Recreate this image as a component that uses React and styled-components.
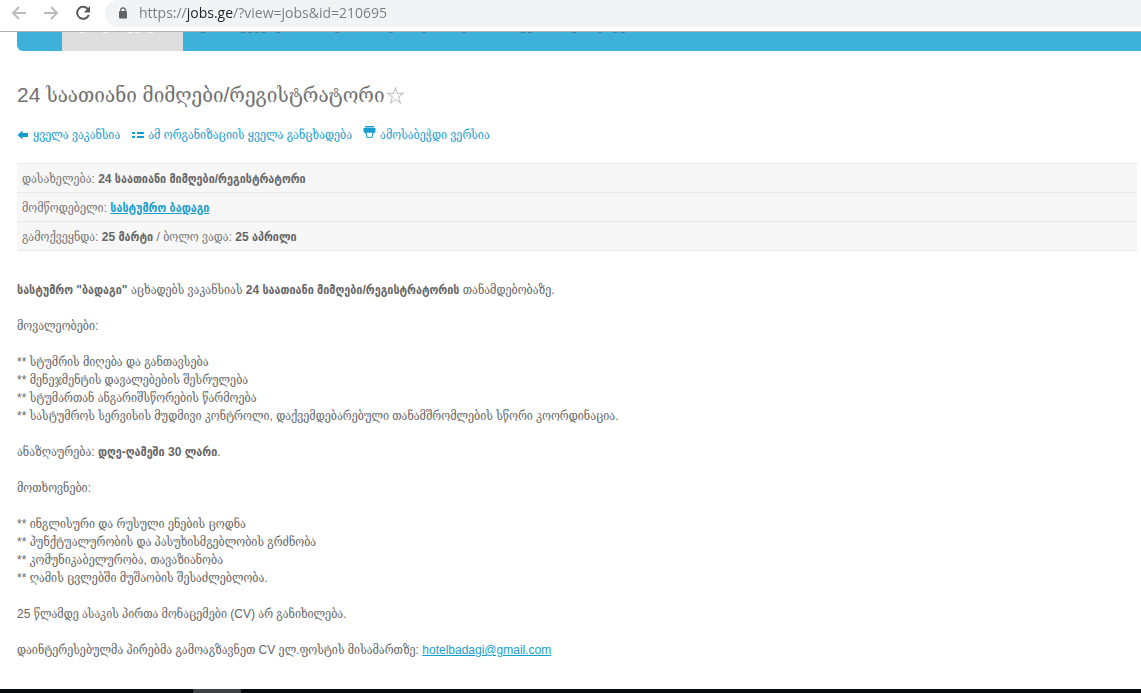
import React, { useState } from 'react';
import styled, { createGlobalStyle } from 'styled-components';

const duties = [
  'სტუმრის მიღება და განთავსება',
  'მენეჯმენტის დავალებების შესრულება',
  'სტუმართან ანგარიშსწორების წარმოება',
  'სასტუმროს სერვისის მუდმივი კონტროლი, დაქვემდებარებული თანამშრომლების სწორი კოორდინაცია.',
];

const requirements = [
  'ინგლისური და რუსული ენების ცოდნა',
  'პუნქტუალურობის და პასუხისმგებლობის გრძნობა',
  'კომუნიკაბელურობა, თავაზიანობა',
  'ღამის ცვლებში მუშაობის შესაძლებლობა.',
];

// tips of the menu letters that stick out under the toolbar
const lightTips = [18, 41, 66, 73, 87];
const darkTips = [18, 58, 65, 72, 79, 93, 152, 206, 239, 279, 338, 345, 389, 415, 430, 438];

function ArrowIcon({ flip }) {
  return (
    <svg width="16" height="16" viewBox="0 0 16 16" fill="none" stroke="currentColor" strokeWidth="2" aria-hidden="true">
      {flip ? <path d="M1 8h13M8 2l6 6-6 6" /> : <path d="M15 8H2M8 2L2 8l6 6" />}
    </svg>
  );
}

function ReloadIcon() {
  return (
    <svg width="16" height="16" viewBox="0 0 16 16" aria-hidden="true">
      <path d="M13.2 4.6A6 6 0 1 0 13.8 9.8" fill="none" stroke="currentColor" strokeWidth="2" />
      <path d="M15 1v6.4H8.8z" fill="currentColor" />
    </svg>
  );
}

function LockIcon() {
  return (
    <svg width="10" height="12" viewBox="0 0 10 12" aria-hidden="true">
      <rect x="1" y="4" width="8" height="7.5" rx="1" fill="currentColor" />
      <path d="M2.8 5V3a2.2 2.2 0 0 1 4.4 0v2" fill="none" stroke="currentColor" strokeWidth="1.3" />
    </svg>
  );
}

function BackIcon() {
  return (
    <svg width="12" height="10" viewBox="0 0 12 10" fill="currentColor" aria-hidden="true">
      <path d="M0.5 5L5.5 0.5V3H11v4H5.5v2.5z" />
    </svg>
  );
}

function ListIcon() {
  return (
    <svg width="13" height="8" viewBox="0 0 13 8" fill="currentColor" aria-hidden="true">
      <path d="M1 1h3v2H1zM6 1h7v2H6zM1 5h3v2H1zM6 5h7v2H6z" />
    </svg>
  );
}

function PrintIcon() {
  return (
    <svg width="13" height="12" viewBox="0 0 13 12" aria-hidden="true">
      <path d="M2 0h9v1.5H2zM0.5 2h12v3.5L10.8 7.5H2.2L0.5 5.5z" fill="currentColor" />
      <path d="M3 6h7l-0.8 5.4H3.8z" fill="#fff" stroke="currentColor" />
      <path d="M2 5h9v1.5H2z" fill="currentColor" />
    </svg>
  );
}

function StarIcon({ filled }) {
  return (
    <svg width="17" height="17" viewBox="0 0 16 16" aria-hidden="true">
      <path
        d="M8 0.9l1.8 5.1h5.6l-4.5 3.4 1.8 5.6L8 11.6 3.3 15l1.8-5.6L0.6 6h5.6z"
        fill={filled ? '#ffcc33' : '#fff'}
        stroke="#c4c4c4"
      />
    </svg>
  );
}

function Tips({ points, width, color }) {
  return (
    <svg width={width} height="1" aria-hidden="true">
      {points.map((x) => (
        <rect key={x} x={x} y="0" width="4" height="1" fill={color} />
      ))}
    </svg>
  );
}

export default function App() {
  const [url, setUrl] = useState('https://jobs.ge/?view=jobs&id=210695');
  const [starred, setStarred] = useState(false);

  return (
    <Page>
      <GlobalStyle />
      <Toolbar>
        <ToolButton type="button" aria-label="Back" $muted>
          <ArrowIcon />
        </ToolButton>
        <ToolButton type="button" aria-label="Forward" $muted>
          <ArrowIcon flip />
        </ToolButton>
        <ToolButton type="button" aria-label="Reload">
          <ReloadIcon />
        </ToolButton>
        <AddressBar>
          <LockIcon />
          <AddressInput
            type="text"
            aria-label="Address"
            spellCheck="false"
            value={url}
            onChange={(e) => setUrl(e.target.value)}
          />
        </AddressBar>
      </Toolbar>

      <Menu>
        <MenuHome />
        <MenuActive>
          <Tips points={lightTips} width={120} color="#f8f8f8" />
        </MenuActive>
        <Tips points={darkTips} width={450} color="#3a86a2" />
      </Menu>

      <Content>
        <TitleRow>
          <Title>24 საათიანი მიმღები/რეგისტრატორი</Title>
          <StarButton type="button" aria-label="Favourite" aria-pressed={starred} onClick={() => setStarred(!starred)}>
            <StarIcon filled={starred} />
          </StarButton>
        </TitleRow>

        <Links>
          <IconLink href="#all">
            <BackIcon />
            ყველა ვაკანსია
          </IconLink>
          <IconLink href="#company">
            <ListIcon />
            ამ ორგანიზაციის ყველა განცხადება
          </IconLink>
          <IconLink href="#print" $raised>
            <PrintIcon />
            ამოსაბეჭდი ვერსია
          </IconLink>
        </Links>

        <Details>
          <tbody>
            <tr>
              <Cell>
                დასახელება: <Bold>24 საათიანი მიმღები/რეგისტრატორი</Bold>
              </Cell>
            </tr>
            <tr>
              <Cell>
                მომწოდებელი: <Bold><TextLink href="#company">სასტუმრო ბადაგი</TextLink></Bold>
              </Cell>
            </tr>
            <tr>
              <Cell>
                გამოქვეყნდა: <Bold>25 მარტი</Bold> / ბოლო ვადა: <Bold>25 აპრილი</Bold>
              </Cell>
            </tr>
          </tbody>
        </Details>

        <Description>
          <p>
            <Bold>სასტუმრო "ბადაგი"</Bold> აცხადებს ვაკანსიას <Bold>24 საათიანი მიმღები/რეგისტრატორის</Bold> თანამდებობაზე.
          </p>
          <p>მოვალეობები:</p>
          <StarList>
            {duties.map((item) => (
              <li key={item}>** {item}</li>
            ))}
          </StarList>
          <p>
            ანაზღაურება: <Bold>დღე-ღამეში 30 ლარი</Bold>.
          </p>
          <p>მოთხოვნები:</p>
          <StarList>
            {requirements.map((item) => (
              <li key={item}>** {item}</li>
            ))}
          </StarList>
          <p>25 წლამდე ასაკის პირთა მონაცემები (CV) არ განიხილება.</p>
          <p>
            დაინტერესებულმა პირებმა გამოაგზავნეთ CV ელ.ფოსტის მისამართზე:{' '}
            <TextLink href="mailto:hotelbadagi@gmail.com">hotelbadagi@gmail.com</TextLink>
          </p>
        </Description>
      </Content>

      <Taskbar>
        <TaskbarItem />
      </Taskbar>
    </Page>
  );
}

const GlobalStyle = createGlobalStyle`
  * {
    box-sizing: border-box;
  }
  body {
    margin: 0;
    background: #fff;
    color: #666;
    font-family: "Liberation Sans", "DejaVu Serif Condensed", sans-serif;
    font-size: 12px;
    line-height: 18px;
  }
  svg {
    display: block;
    flex-shrink: 0;
  }
`;

const Page = styled.div`
  display: flex;
  flex-direction: column;
  min-height: 100vh;
`;

const Toolbar = styled.header`
  display: flex;
  align-items: flex-start;
  gap: 16px;
  padding-left: 11px;
  height: 32px;
  border-bottom: 1px solid #b2b2b2;
`;

const ToolButton = styled.button`
  display: flex;
  margin-top: 5px;
  padding: 0;
  border: none;
  background: none;
  color: ${(props) => (props.$muted ? '#babcbe' : '#55585c')};
  cursor: pointer;
`;

const AddressBar = styled.div`
  flex: 1;
  display: flex;
  align-items: center;
  gap: 11px;
  height: 27px;
  margin-left: -2px;
  padding: 0 0 2px 13px;
  border-radius: 14px 0 0 14px;
  background: #f1f3f4;
  color: #5f6368;
`;

/* the host part of the address is darker than the rest */
const AddressInput = styled.input`
  flex: 1;
  min-width: 0;
  padding: 0;
  border: none;
  outline: none;
  font-family: "Open Sans", sans-serif;
  font-size: 14px;
  line-height: 20px;
  color: transparent;
  caret-color: #202124;
  background: linear-gradient(to right, #777b80 47px, #202124 47px, #202124 94px, #777b80 94px);
  background-clip: text;
  -webkit-background-clip: text;
`;

const Menu = styled.nav`
  display: flex;
  height: 19px;
  margin-left: 17px;
  border-radius: 0 0 0 6px;
  background: #3db1da;
  overflow: hidden;
`;

const MenuHome = styled.div`
  width: 45px;
`;

const MenuActive = styled.div`
  width: 121px;
  background: #dedede;
`;

const Content = styled.main`
  padding: 29px 4px 0 17px;
`;

const TitleRow = styled.div`
  display: flex;
  align-items: center;
  gap: 3px;
`;

const Title = styled.h1`
  margin: 0;
  color: #707070;
  font-size: 21px;
  font-weight: normal;
  line-height: 30px;
`;

const StarButton = styled.button`
  padding: 0;
  border: none;
  background: none;
  cursor: pointer;
`;

const Links = styled.div`
  display: flex;
  gap: 11px;
  margin: 16px 0 19px;
`;

const IconLink = styled.a`
  display: flex;
  align-items: ${(props) => (props.$raised ? 'flex-start' : 'center')};
  gap: 4px;
  color: #179dd0;
  text-decoration: none;
`;

const Details = styled.table`
  width: 100%;
  border-collapse: collapse;
  background: #f7f7f7;
  color: #777;
`;

const Cell = styled.td`
  height: 29px;
  padding: 1px 5px 0;
  border-top: 1px solid #e9e9e9;
  border-bottom: 1px solid #e9e9e9;
`;

const Bold = styled.b`
  color: #666;
  font-family: "Liberation Sans", "DejaVu Sans Condensed", sans-serif;
`;

const TextLink = styled.a`
  color: #179dd0;
  text-decoration: underline;
`;

const Description = styled.div`
  padding-top: 30px;

  p {
    margin: 0 0 18px;
  }
`;

const StarList = styled.ul`
  margin: 0 0 18px;
  padding: 0;
  list-style: none;
`;

const Taskbar = styled.footer`
  height: 4px;
  margin-top: auto;
  padding-left: 193px;
  background: #04090c;
`;

const TaskbarItem = styled.div`
  width: 48px;
  height: 4px;
  background: #3b4043;
`;
